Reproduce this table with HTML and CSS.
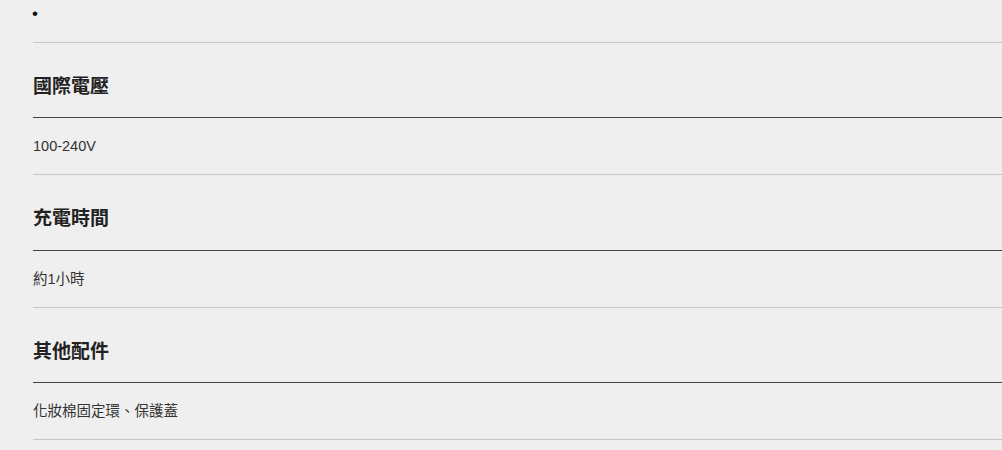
FILE: index.html
```html
<!DOCTYPE html>
<html lang="zh-Hant">
<head>
<meta charset="utf-8">
<link rel="stylesheet" href="styles.css">
</head>
<body>
<div class="spec">
  <div class="top"><span class="dot">•</span></div>
  <div class="item">
    <h3 class="label">國際電壓</h3>
    <p class="value">100-240V</p>
  </div>
  <div class="item">
    <h3 class="label">充電時間</h3>
    <p class="value">約1小時</p>
  </div>
  <div class="item">
    <h3 class="label">其他配件</h3>
    <p class="value">化妝棉固定環、保護蓋</p>
  </div>
</div>
</body>
</html>
```

FILE: styles.css
```css
html, body {
  margin: 0;
  padding: 0;
  background: #efefef;
  overflow: hidden;
}
body {
  font-family: "Liberation Sans", "Noto Sans CJK TC", sans-serif;
  color: #333;
}
.spec {
  padding-left: 33px;
  width: 1100px;
}
.top {
  height: 42.5px;
  box-sizing: border-box;
  padding-top: 4px;
  font-size: 14px;
  line-height: 20px;
  color: #111;
  border-bottom: 1px solid #c6c6c6;
}
.dot {
  font-size: 17px;
  margin-left: -1px;
}
.label {
  margin: 0;
  padding-top: 31px;
  height: 43.5px;
  font-size: 19px;
  line-height: 26px;
  font-weight: bold;
  color: #222;
  border-bottom: 1px solid #444;
}
.value {
  margin: 0;
  height: 57px;
  box-sizing: border-box;
  padding-top: 18px;
  font-size: 14.5px;
  line-height: 20px;
  color: #333;
  border-bottom: 1px solid #c6c6c6;
}
```
